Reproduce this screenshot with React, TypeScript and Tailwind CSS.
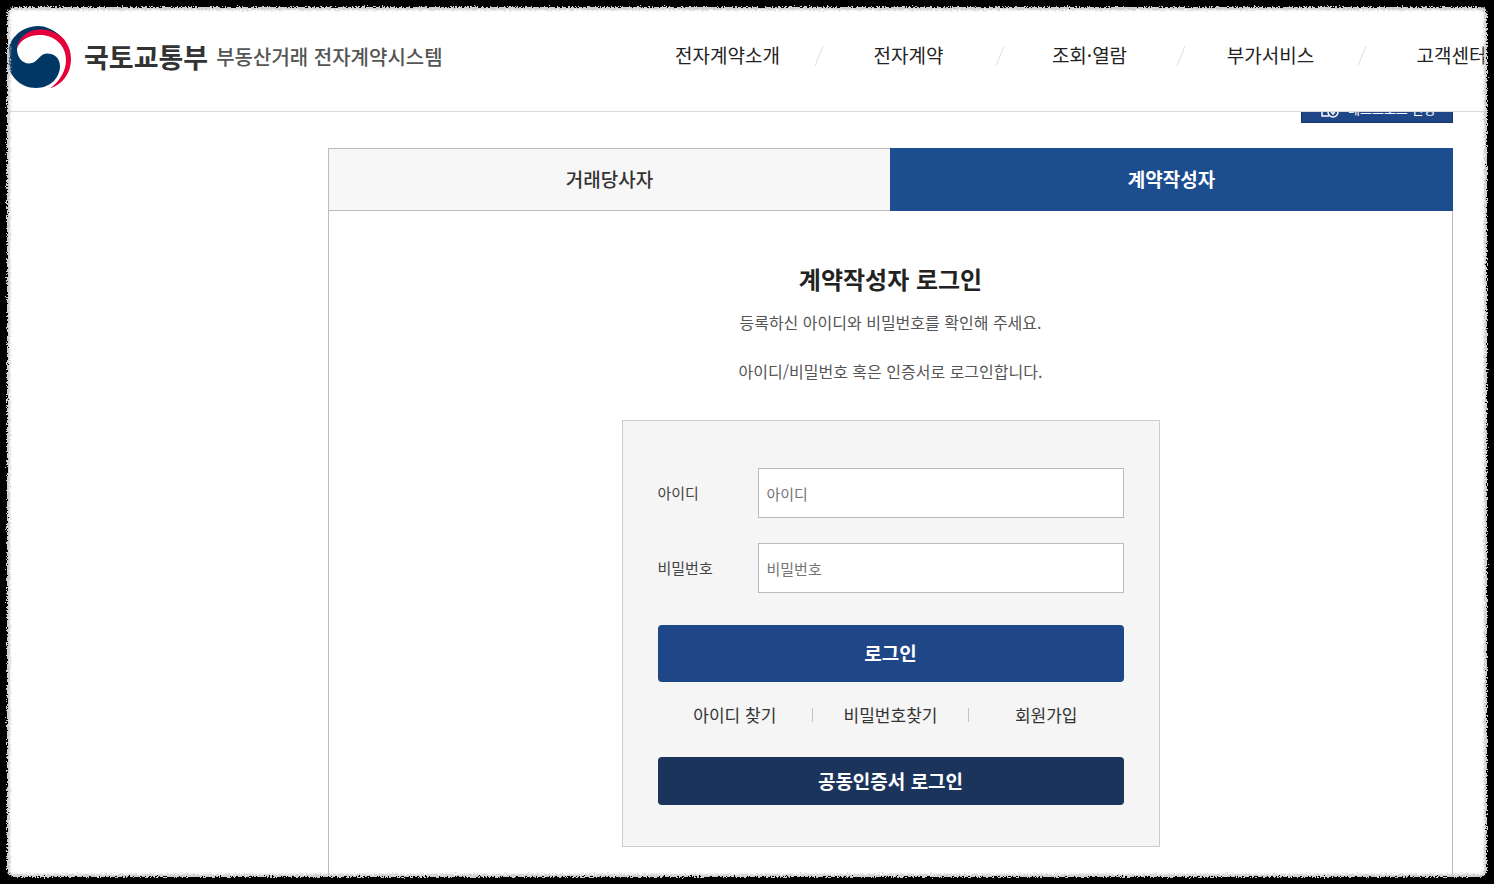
import type { ReactNode } from "react";

const navItems = ["전자계약소개", "전자계약", "조회·열람", "부가서비스", "고객센터"];

function Emblem() {
  return (
    <svg viewBox="0 0 66 64" className="h-16 w-[66px] shrink-0" aria-hidden="true">
      <path d="M11 24C11 12 22 3.5 35 3.5C52 3.5 65 17 65 34C65 48 57 59 44 63.5C54 56 60 46 60 35C60 20 48 10 34 10C22 10 13 16 11 24Z" fill="#e6003a" />
      <path d="M56 13C48 4 39 1 32 1C15 1 1 15 1 32C1 50 14 63 30 63C45 63 54 52 54 41C54 33 48 28.500 41 28.500C33 28.500 32 38.500 23 38.500C16 38.500 11 32 11 24C12 12 22 4.500 35 4.500C43 4.500 50 7 56 13Z" fill="#003764" />
    </svg>
  );
}

function Header() {
  return (
    <header className="sticky top-0 z-10 flex h-28 shrink-0 items-center overflow-hidden border-b border-[#dcdcdc] bg-white">
      <a href="#home" className="flex w-[637px] shrink-0 items-center pt-[3px] pl-[6px]">
        <Emblem />
        <span className="pl-3 text-[27px] leading-8 font-bold text-[#333]">국토교통부</span>
        <span className="pl-2 text-xl leading-8 font-medium text-[#555]">부동산거래 전자계약시스템</span>
      </a>
      <nav className="flex shrink-0 pb-[2px]">
        {navItems.map((item, i) => (
          <div key={item} className="relative w-[181px] text-center">
            <a href="#menu" className="text-[19px] leading-7 text-[#222]">{item}</a>
            {i < navItems.length - 1 && (
              <svg viewBox="0 0 10 20" className="absolute top-[5px] -right-[6px] h-5 w-[10px]" aria-hidden="true">
                <path d="M9 0L1 20" stroke="#dedede" fill="none" />
              </svg>
            )}
          </div>
        ))}
      </nav>
    </header>
  );
}

function Field({ id, label, type }: { id: string; label: string; type: string }) {
  return (
    <div className="flex items-center">
      <label htmlFor={id} className="w-[100px] shrink-0 text-[15px] text-[#444]">{label}</label>
      <input
        id={id}
        type={type}
        placeholder={label}
        className="h-[50px] min-w-0 flex-1 border border-[#bbb] bg-white px-2 text-[15px] text-[#333] placeholder:text-[#757575]"
      />
    </div>
  );
}

function HelpLink({ children }: { children: ReactNode }) {
  return <a href="#help" className="flex-1 text-center">{children}</a>;
}

function RoughFrame() {
  return (
    <div className="pointer-events-none fixed -inset-4 z-20 [filter:url(#rough-edge)]" aria-hidden="true">
      <svg className="absolute h-0 w-0">
        <filter id="rough-edge" x="0" y="0" width="100%" height="100%" colorInterpolationFilters="sRGB">
          <feTurbulence type="fractalNoise" baseFrequency="0.6" numOctaves="2" seed="4" result="noise" />
          <feDisplacementMap in="SourceGraphic" in2="noise" scale="6" xChannelSelector="R" yChannelSelector="G" />
        </filter>
      </svg>
      <div className="h-full w-full rounded-[30px] border-[23px] border-black shadow-[0_0_0_20px_black,inset_0_0_2px_3px_#cfcfcf]" />
    </div>
  );
}

export default function App() {
  return (
    <div
      lang="ko"
      className="flex min-h-screen flex-col overflow-x-clip bg-white font-['Noto_Sans_CJK_KR',sans-serif]"
    >
      <Header />
      <main className="-mt-[17px] mr-[41px] ml-[328px] flex flex-1 flex-col">
        <button type="button" className="flex h-7 w-[152px] items-center gap-2 self-end border border-[#1b3568] bg-[#1f4788] pl-[18px] text-[13px] text-white">
          <svg viewBox="0 0 20 20" className="h-5 w-5" fill="none" stroke="currentColor" strokeWidth="1.5" aria-hidden="true">
            <path d="M9 17H2V2H14V8" />
            <circle cx="13" cy="13" r="5" />
            <path d="M11 13L13 15L16 11" />
          </svg>
          테스트모드 신청
        </button>
        <div role="tablist" className="mt-[25px] flex h-[63px] shrink-0 text-[19px]">
          <button type="button" role="tab" aria-selected="false" className="flex-1 border border-r-0 border-[#bbb] bg-[#f7f7f7] font-medium text-[#333]">거래당사자</button>
          <button type="button" role="tab" aria-selected="true" className="flex-1 border border-[#1c4d8f] bg-[#1c4d8f] font-bold text-white">계약작성자</button>
        </div>
        <section className="flex flex-1 flex-col items-center border-x border-[#bbb] pt-12 pb-[37px]">
          <h1 className="text-2xl leading-10 font-bold text-[#222]">계약작성자 로그인</h1>
          <div className="mt-[11px] flex flex-col gap-[25px] text-center text-base text-[#555]">
            <p>등록하신 아이디와 비밀번호를 확인해 주세요.</p>
            <p>아이디/비밀번호 혹은 인증서로 로그인합니다.</p>
          </div>
          <form className="mt-[37px] flex w-[538px] max-w-full flex-col border border-[#ccc] bg-[#f5f5f5] px-[35px] pt-[47px] pb-[41px]" onSubmit={(e) => e.preventDefault()}>
            <div className="flex flex-col gap-[25px]">
              <Field id="user-id" label="아이디" type="text" />
              <Field id="user-pw" label="비밀번호" type="password" />
            </div>
            <button type="submit" className="mt-8 h-[57px] rounded bg-[#1f4788] text-[19px] font-bold text-white">로그인</button>
            <div className="mt-4 mb-[26px] flex h-[33px] items-center text-[17px] text-[#333]">
              <HelpLink>아이디 찾기</HelpLink>
              <span className="h-[14px] w-px bg-[#c4c4c4]" />
              <HelpLink>비밀번호찾기</HelpLink>
              <span className="h-[14px] w-px bg-[#c4c4c4]" />
              <HelpLink>회원가입</HelpLink>
            </div>
            <button type="button" className="h-12 rounded bg-[#1b345c] text-[19px] font-bold text-white">공동인증서 로그인</button>
          </form>
        </section>
      </main>
      <RoughFrame />
    </div>
  );
}
